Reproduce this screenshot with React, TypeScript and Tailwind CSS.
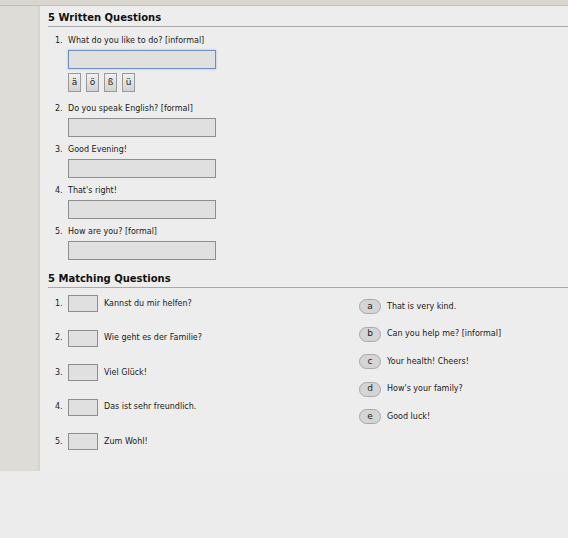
import React from "react";

const font = { fontFamily: '"DejaVu Sans", "Liberation Sans", sans-serif' };

const written = [
  "What do you like to do? [informal]",
  "Do you speak English? [formal]",
  "Good Evening!",
  "That's right!",
  "How are you? [formal]",
];

const matchingLeft = [
  "Kannst du mir helfen?",
  "Wie geht es der Familie?",
  "Viel Glück!",
  "Das ist sehr freundlich.",
  "Zum Wohl!",
];

const matchingRight: [string, string][] = [
  ["a", "That is very kind."],
  ["b", "Can you help me? [informal]"],
  ["c", "Your health! Cheers!"],
  ["d", "How's your family?"],
  ["e", "Good luck!"],
];

function Heading({ children }: { children: React.ReactNode }) {
  return (
    <div className="ml-[8px] h-[21px] border-b border-[#a9a9a9] pt-[5px]">
      <div className="text-[10px] font-bold leading-[14px] text-[#111]">{children}</div>
    </div>
  );
}

export default function App() {
  return (
    <div className="w-[568px] h-[538px] bg-[#ececec] overflow-hidden text-[#1a1a1a]" style={font}>
      <div className="h-[6px] bg-[#d9d6d0] border-b border-[#c3c1bb]" />
      <div className="flex h-[465px]">
        <div className="w-[40px] bg-[#dedcd7] shadow-[inset_-2px_0_2px_rgba(0,0,0,0.04)]" />
        <div className="flex-1 bg-[#ededed] flex flex-col">
          <Heading>5 Written Questions</Heading>
          <div className="flex flex-col mt-[8px]">
            {written.map((q, i) => (
              <div key={i} className={i === 0 ? "mb-[11px]" : "mb-[7px]"}>
                <div className="flex h-[12px] items-center text-[8px] leading-[12px]">
                  <span className="w-[28px] pl-[15px]">{i + 1}.</span>
                  <span>{q}</span>
                </div>
                <div
                  className={
                    "ml-[28px] mt-[3px] w-[148px] h-[19px] bg-[#e0e0e0] border " +
                    (i === 0
                      ? "border-[#6f8fbf] shadow-[0_0_2px_rgba(90,130,200,0.5)]"
                      : "border-[#8e8e8e]")
                  }
                />
                {i === 0 && (
                  <div className="ml-[28px] mt-[4px] flex gap-[5px]">
                    {["ä", "ö", "ß", "ü"].map((c) => (
                      <div
                        key={c}
                        className="w-[13px] h-[19px] flex items-center justify-center text-[9px] border border-[#9a9a9a] bg-gradient-to-b from-[#f0f0f0] to-[#d2d2d2] text-[#222]"
                      >
                        {c}
                      </div>
                    ))}
                  </div>
                )}
              </div>
            ))}
          </div>
          <Heading>5 Matching Questions</Heading>
          <div className="flex mt-[7px]">
            <div className="w-[319px] flex flex-col gap-[17.5px]">
              {matchingLeft.map((t, i) => (
                <div key={i} className="flex items-center h-[17px] text-[8px]">
                  <span className="w-[28px] pl-[15px]">{i + 1}.</span>
                  <div className="w-[30px] h-[17px] bg-[#e0e0e0] border border-[#8e8e8e]" />
                  <span className="ml-[6px]">{t}</span>
                </div>
              ))}
            </div>
            <div className="flex flex-col gap-[12.5px] pt-[4px]">
              {matchingRight.map(([l, t]) => (
                <div key={l} className="flex items-center h-[15px] text-[8px]">
                  <div className="w-[22px] h-[15px] rounded-full bg-[#d5d5d5] border border-[#a8a8a8] flex items-center justify-center text-[9px] text-[#222]">
                    {l}
                  </div>
                  <span className="ml-[6px]">{t}</span>
                </div>
              ))}
            </div>
          </div>
        </div>
      </div>
    </div>
  );
}
